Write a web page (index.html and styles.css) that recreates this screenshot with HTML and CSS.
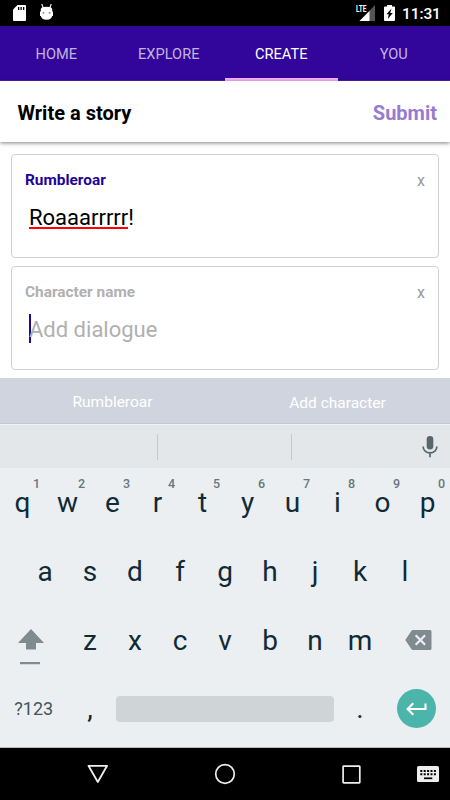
FILE: index.html
```html
<!DOCTYPE html>
<html lang="en">
<head>
<meta charset="utf-8">
<title>Write a story</title>
<link rel="stylesheet" href="styles.css">
</head>
<body>
<div class="phone">
  <div class="status">
    <svg class="sd" width="13" height="16" viewBox="0 0 13 16"><path fill="#fff" d="M4.500 0H12a1 1 0 0 1 1 1v14a1 1 0 0 1-1 1H1a1 1 0 0 1-1-1V4.500z"/><path fill="#000" d="M5 2h1.300v3H5zM7.500 2h1.300v3H7.500zM10 2h1.300v3H10z"/></svg>
    <svg class="cat" width="13" height="16" viewBox="0 0 13 16"><path d="M1.800 0l1.400 4M11.200 0L9.800 4" stroke="#ddd" stroke-width="1.300"/><path fill="#fff" d="M.8 5q.5-2.200 5.700-2.200T12.200 5v6q0 4.700-5.700 4.700T.8 11z"/><path fill="#fff" d="M0 7.500h13V12H0z"/><path fill="#555" d="M2.700 8.200h1.500v1.200H2.700zM8.800 8.200h1.500v1.200H8.800z"/></svg>
    <span class="grow"></span>
    <svg class="signal" width="20" height="17" viewBox="0 0 20 17"><path fill="#555" d="M19 0v16H3.500z"/><path fill="#fff" d="M13.500 6v10H3.500z"/><path fill="#000" d="M0 0h11v8H0z"/><text x="0" y="7.300" textLength="10.500" lengthAdjust="spacingAndGlyphs">LTE</text></svg>
    <svg class="battery" width="11" height="16" viewBox="0 0 11 16"><path fill="#fff" d="M3 0h5v1.600h2a1 1 0 0 1 1 1V15a1 1 0 0 1-1 1H1a1 1 0 0 1-1-1V2.600a1 1 0 0 1 1-1h2z"/><path fill="#000" d="M7.500 3.500L2.500 9.300h2.300L3.800 14l5-6H6.200z"/></svg>
    <span class="clock">11:31</span>
  </div>
  <nav class="tabs">
    <span class="tab">HOME</span><span class="tab">EXPLORE</span><span class="tab active">CREATE</span><span class="tab">YOU</span>
  </nav>
  <header class="header"><h1>Write a story</h1><span class="submit">Submit</span></header>
  <main class="story">
    <section class="card">
      <div class="top"><span class="name">Rumbleroar</span><span class="close">x</span></div>
      <p class="line"><span class="misspelt">Roaaarrrrr</span>!</p>
    </section>
    <section class="card empty">
      <div class="top"><span class="name">Character name</span><span class="close">x</span></div>
      <p class="line hint"><i class="caret"></i>Add dialogue</p>
    </section>
  </main>
  <div class="cast"><span class="existing">Rumbleroar</span><span>Add character</span></div>
  <div class="suggest">
    <span></span><span></span><span></span>
    <svg class="mic" width="16" height="22" viewBox="0 0 16 22"><rect x="4.700" y="0" width="6.600" height="13.600" rx="3.300" fill="#57666b"/><path d="M1.100 10.500a6.900 6.400 0 0 0 13.800 0M8 17v4.300" fill="none" stroke="#57666b" stroke-width="1.700"/></svg>
  </div>
  <div class="keys">
    <div class="row first"><span class="key">q<sup>1</sup></span><span class="key">w<sup>2</sup></span><span class="key">e<sup>3</sup></span><span class="key">r<sup>4</sup></span><span class="key">t<sup>5</sup></span><span class="key">y<sup>6</sup></span><span class="key">u<sup>7</sup></span><span class="key">i<sup>8</sup></span><span class="key">o<sup>9</sup></span><span class="key">p<sup>0</sup></span></div>
    <div class="row"><span class="key">a</span><span class="key">s</span><span class="key">d</span><span class="key">f</span><span class="key">g</span><span class="key">h</span><span class="key">j</span><span class="key">k</span><span class="key">l</span></div>
    <div class="row">
      <span class="key wide"><svg class="shift" width="26" height="36" viewBox="0 0 26 36"><path fill="#7f8b8f" d="M13 0l13 14h-8v6.500H8V14H0zM2 33h20v2.200H2z"/></svg></span>
      <span class="key">z</span><span class="key">x</span><span class="key">c</span><span class="key">v</span><span class="key">b</span><span class="key">n</span><span class="key">m</span>
      <span class="key wide"><svg class="delete" width="27" height="20" viewBox="0 0 27 20"><path fill="#7f8b8f" d="M7.500 0H25a1.500 1.500 0 0 1 1.500 1.500v17A1.500 1.500 0 0 1 25 20H7.500L6.300 19 .3 10l6-9z"/><path d="M10.700 5.200l9.400 9.600M20.100 5.200l-9.400 9.600" stroke="#eceff1" stroke-width="2.200"/></svg></span>
    </div>
    <div class="row">
      <span class="key wide symbols">?123</span><span class="key">,</span><span class="space"></span><span class="key">.</span>
      <span class="key wide"><span class="enter"><svg width="21" height="14" viewBox="0 0 21 14"><path d="M19.500 1.500v5.500H2M7.300 1.300L1.600 7l5.700 5.700" fill="none" stroke="#fff" stroke-width="2.100"/></svg></span></span>
    </div>
  </div>
  <div class="navbar">
    <svg class="back" width="22" height="20" viewBox="0 0 22 20"><path d="M1.500 1.800h18.600L10.800 18z" fill="none" stroke="#eee" stroke-width="1.800" stroke-linejoin="round"/></svg>
    <svg class="home" width="22" height="22" viewBox="0 0 22 22"><circle cx="11" cy="11" r="9.300" fill="none" stroke="#eee" stroke-width="1.700"/></svg>
    <svg class="recent" width="19" height="19" viewBox="0 0 19 19"><rect x="1.100" y="1.100" width="16.700" height="16.700" rx=".6" fill="none" stroke="#eee" stroke-width="1.700"/></svg>
    <svg class="ime" width="22" height="16" viewBox="0 0 22 16"><rect width="22" height="16" rx="1.500" fill="#eee"/><path d="M3.300 5h15.700M3.300 8.300h15.700" stroke="#000" stroke-width="2" stroke-dasharray="2 1.400"/><path d="M7 12.300h8.300" stroke="#000" stroke-width="1.700"/></svg>
  </div>
</div>
</body>
</html>
```
FILE: styles.css
```css
* { box-sizing: border-box; }
body { margin: 0; font-family: Roboto, "Liberation Sans", sans-serif; background: #fff; }
.phone { width: 450px; height: 800px; display: flex; flex-direction: column; overflow: hidden; }
svg { display: block; flex: none; }

.status { height: 26px; flex: none; background: #000; color: #fff; display: flex; align-items: flex-start; padding: 5px 10px 0 13px; }
.cat { margin: -1px 0 0 14px; }
.grow { flex: 1; }
.signal { overflow: visible; }
.signal text { font: bold 9.500px Roboto, sans-serif; fill: #fff; }
.battery { margin-left: 8px; }
.clock { width: 38px; font-size: 15.500px; font-weight: 500; line-height: 18px; margin-left: 7px; letter-spacing: -.1px; }

.tabs { height: 55px; flex: none; background: #33069b; display: grid; grid-template-columns: repeat(4, 1fr); }
.tab { display: flex; align-items: center; justify-content: center; font-size: 14.600px; color: #c1b4e1; border-bottom: 1px solid #4a22a6; padding-top: 2px; }
.tab.active { color: #fff; border-bottom: 3px solid #fbb1fb; padding-top: 4px; }

.header { height: 61px; flex: none; display: flex; align-items: center; justify-content: space-between; padding: 2px 13px 0 17.500px; background: #fff; box-shadow: 0 1px 4px rgba(0, 0, 0, .5); }
.header h1 { margin: 0; font-size: 20px; font-weight: 700; color: #000; }
.submit { font-size: 20px; font-weight: 700; color: #957cce; }

.story { height: 236px; flex: none; padding: 12px 11px 0; display: flex; flex-direction: column; gap: 8px; }
.card { height: 104px; border: 1px solid #d0d0d0; border-radius: 4px; padding: 15px 13px 0; }
.top { display: flex; justify-content: space-between; height: 20px; line-height: 20px; font-size: 15.400px; }
.name { color: #1e0596; font-weight: 700; }
.empty .name { color: #b0b0b0; }
.close { color: #999; font-size: 16px; padding-top: 1px; }
.line { margin: 13px 0 0 4px; font-size: 22px; line-height: 30px; color: #000; }
.misspelt { display: inline-block; height: 26px; border-bottom: 2px solid #f00; }
.hint { color: #b0b0b0; display: flex; align-items: center; }
.caret { width: 2px; height: 29px; background: #1e0596; margin: -4px -2px 0 0; }

.cast { height: 47px; flex: none; background: #d0d4de; border-bottom: 1px solid #f0f2f4; display: grid; grid-template-columns: 1fr 1fr; align-items: center; justify-items: center; color: #fff; font-size: 15.500px; padding-top: 3px; box-shadow: inset 0 -1px 0 #c4c8d0; }
.existing { padding-bottom: 1px; }

.suggest { height: 44px; flex: none; background: #e3e7e9; display: grid; grid-template-columns: 158px 134px 1fr 50px; align-items: center; border-bottom: 1px solid #edf0f2; }
.suggest span { height: 26px; border-right: 1px solid #c4c9cb; }
.suggest span:nth-child(3) { border: 0; }
.mic { margin-left: 22px; }

.keys { height: 279px; flex: none; background: #eceff1; border-bottom: 1px solid #b9bdbf; display: grid; grid-template-rows: 68px 69px 68px 69px; color: #102a36; font-size: 28px; }
.row { display: flex; justify-content: center; }
.key { width: 45px; display: flex; align-items: center; justify-content: center; position: relative; }
.first .key { padding-bottom: 2px; }
.key.wide { width: 67.500px; }
.key sup { position: absolute; left: 33px; top: 8px; font-size: 12.500px; line-height: 14px; font-weight: 500; color: #68777d; }
.shift { margin: 14px 5px 0 0; }
.delete { margin: -1px 0 0 5px; }
.key.symbols { font-size: 18px; color: #40555e; }
.space { width: 225px; display: flex; align-items: center; padding: 0 3.500px; }
.space::before { content: ""; width: 100%; height: 26px; border-radius: 4px; background: #cfd4d7; }
.enter { width: 39px; height: 39px; border-radius: 50%; background: #4bb5ab; display: flex; align-items: center; justify-content: center; }

.navbar { flex: 1; background: #000; display: flex; align-items: center; padding: 0 11px 0 87px; }
.home { margin-left: 105px; }
.recent { margin-left: 106px; }
.ime { margin-left: auto; }
```
